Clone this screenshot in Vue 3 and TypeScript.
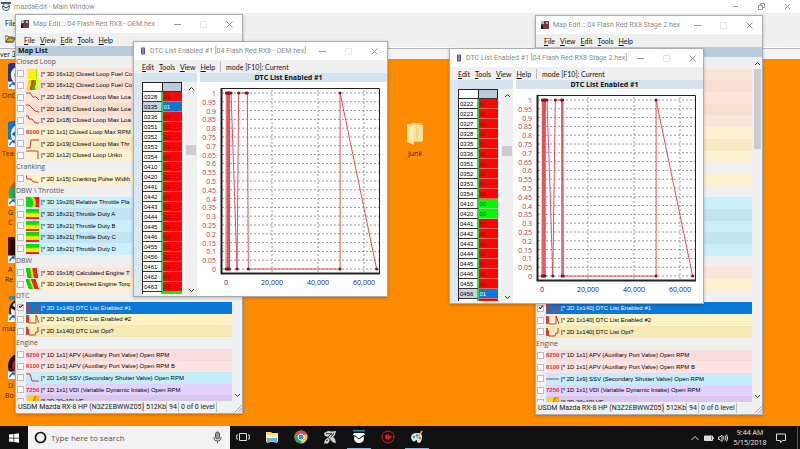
<script setup lang="ts">
interface Thumb {
  kind: 'line' | 'value' | 'surface'
  data: string
}
interface Row {
  head?: string
  text?: string
  tone?: string
  thumb?: Thumb
  checked?: boolean
}
interface Point { x: number; y: number }
interface MapWindow { id: string; title: string; heading: string; rows: Row[] }
interface DtcWindow {
  id: string
  title: string
  codes: string[]
  cleared: string[]
  selected: string
  next: string
  points: Point[]
}

const line = (data: string): Thumb => ({ kind: 'line', data })
const value = (data: string): Thumb => ({ kind: 'value', data })
const surface = (data: string): Thumb => ({ kind: 'surface', data })

const upperRows: Row[] = [
  { head: 'Closed Loop' },
  { text: '[* 3D 16x12] Closed Loop Fuel Co', tone: 'peach', thumb: surface('fuel') },
  { text: '[* 3D 16x12] Closed Loop Fuel Co', tone: 'peach2', thumb: surface('fuel2') },
  { text: '[* 2D 1x18] Closed Loop Max Loa', tone: 'peach', thumb: line('0,1 4,1 7,5 10,5 13,8') },
  { text: '[* 2D 1x18] Closed Loop Max Loa', tone: 'peach2', thumb: line('0,1 3,1 7,5 9,7 13,8') },
  { text: '[* 2D 1x18] Closed Loop Max Loa', tone: 'peach', thumb: line('0,1 2,1 3,4 6,4 9,8 13,8') },
  { text: '[* 1D 1x1] Closed Loop Max RPM', tone: 'cream', thumb: value('6000') },
  { text: '[* 2D 1x19] Closed Loop Max Thr', tone: 'sand', thumb: line('0,9 4,9 5,1 13,1') },
  { text: '[* 2D 1x12] Closed Loop Unkn', tone: 'cream', thumb: line('0,1 12,1 12,9') },
  { head: 'Cranking' },
  { text: '[* 2D 1x15] Cranking Pulse Width', tone: 'cream', thumb: line('0,1 1,5 5,5 7,8 10,8 12,9') },
  { head: 'DBW \\ Throttle' },
  { text: '[* 3D 19x26] Relative Throttle Pla', tone: 'sky', thumb: surface('relative') },
  { text: '[* 3D 18x21] Throttle Duty A', tone: 'sky2', thumb: surface('duty') },
  { text: '[* 3D 18x21] Throttle Duty B', tone: 'sky', thumb: surface('duty') },
  { text: '[* 3D 18x21] Throttle Duty C', tone: 'sky2', thumb: surface('duty') },
  { text: '[* 3D 18x21] Throttle Duty D', tone: 'sky', thumb: surface('duty') },
  { head: 'DBW' },
  { text: '[* 3D 19x18] Calculated Engine T', tone: 'peach', thumb: surface('torque') },
  { text: '[* 3D 20x14] Desired Engine Torq', tone: 'cream', thumb: surface('torque2') },
  { head: 'DTC' },
]

// Rows lying wholly behind another window keep only their colour.
const coveredRows: Row[] = upperRows.map((r) => (r.head ? { head: ' ' } : { tone: r.tone }))

function lowerRows(ssv: string): Row[] {
  return [
    { text: '[* 2D 1x140] DTC List Enabled #1', tone: 'picked', thumb: line('1,9 1,1 2,9 2,1 3,9 10,9 10,1 13,9'), checked: true },
    { text: '[* 2D 1x140] DTC List Enabled #2', tone: 'lemon', thumb: line('0,9 0,1 1,9 1,1 2,9 2,1 3,9 10,9 10,1 13,9') },
    { text: '[* 2D 1x140] DTC List Opt?', tone: 'lemon2', thumb: line('0,9 0,1 1,9 1,1 2,9 2,3 3,9 9,9 10,6 12,6 12,1') },
    { head: 'Engine' },
    { text: '[* 1D 1x1] APV (Auxiliary Port Valve) Open RPM', tone: 'rose', thumb: value('6250') },
    { text: '[* 1D 1x1] APV (Auxiliary Port Valve) Open RPM B', tone: 'rose2', thumb: value('6100') },
    { text: '[* 2D 1x9] SSV (Secondary Shutter Valve) Open RPM', tone: 'aqua', thumb: line(ssv) },
    { text: '[* 1D 1x1] VDI (Variable Dynamic Intake) Open RPM', tone: 'violet', thumb: value('7250') },
    { text: '[* 2D 20x19] VE', tone: 'violet2', thumb: surface('fuel3') },
  ]
}

const mapWindows: MapWindow[] = [
  { id: 'map-oem', title: 'Map Edit :: 04 Flash Red RX8 - OEM.hex', heading: 'Map List', rows: [...upperRows, ...lowerRows('0,1 4,1 6,8 13,8')] },
  { id: 'map-stage', title: 'Map Edit :: 04 Flash Red RX8 Stage 2.hex', heading: '', rows: [...coveredRows, ...lowerRows('0,5 13,5')] },
]

const shared = ['0351', '0352', '0353', '0354', '0410', '0420', '0441', '0442', '0443', '0444', '0445', '0446', '0455', '0456']
const toPoints = (list: number[][]): Point[] => list.map(([x, y]) => ({ x, y }))

const dtcWindows: DtcWindow[] = [
  {
    id: 'dtc-oem',
    title: 'DTC List Enabled #1 [04 Flash Red RX8 - OEM.hex]',
    codes: ['0328', '0335', '0336', ...shared, '0461', '0462', '0463'],
    cleared: [],
    selected: '0335',
    next: 'ok',
    points: toPoints([
      [0, 0], [150, 1], [600, 1], [700, 0], [900, 1], [1100, 0], [1300, 1], [1500, 0], [1550, 1], [2200, 1],
      [4800, 0], [5500, 1], [8700, 1], [9300, 1], [9700, 0], [49600, 0], [49600, 1], [65500, 0],
    ]),
  },
  {
    id: 'dtc-stage',
    title: 'DTC List Enabled #1 [04 Flash Red RX8 Stage 2.hex]',
    codes: ['0222', '0223', '0327', '0328', '0335', '0336', ...shared],
    cleared: ['0410', '0420'],
    selected: '0456',
    next: 'bad',
    points: toPoints([
      [0, 0], [150, 1], [400, 0], [700, 1], [900, 0], [1100, 1], [1300, 0], [1500, 1], [2200, 1],
      [4700, 0], [5800, 1], [8500, 1], [8700, 0], [9000, 1], [9300, 0], [49600, 0], [49600, 1], [65500, 0],
    ]),
  },
]

const X0 = 26
const Y0 = 187
const Y1 = 11
const px = (x: number) => X0 + (x / 20000) * 46
const py = (y: number) => Y0 - y * (Y0 - Y1)
const pathOf = (pts: Point[]) => pts.map((p) => `${px(p.x)},${py(p.y)}`).join(' ')
const yTicks = Array.from({ length: 21 }, (_, i) => i / 20)
const xTicks = [0, 20000, 40000, 60000]

const mapMenu = ['File', 'View', 'Edit', 'Tools', 'Help']
const dtcMenu = ['Edit', 'Tools', 'View', 'Help']

const shortcuts = [
  { id: 'ond', lines: ['OnD'], art: 'navy' },
  { id: 'team', lines: ['Tea'], art: 'team' },
  { id: 'chrome', lines: ['G', 'C'], art: 'ring' },
  { id: 'reader', lines: ['A', 'Re'], art: 'dark' },
  { id: 'maz', lines: ['maz'], art: 'maz' },
  { id: 'bo', lines: ['D', 'Bo'], art: 'black' },
]
</script>

<template>
  <div class="screen">
    <main class="desktop">
      <section class="host">
        <header class="host-title">
          <svg class="gauge" viewBox="0 0 10 9"><path d="M0 0h10v2H0z" fill="#456" /><circle cx="5" cy="5" r="3.6" fill="#eef6f4" stroke="#4a6a70" /><path d="M2 4l3 2 3-2" fill="none" stroke="#333" /></svg>
          <span class="title-text">mazdaEdit - Main Window</span>
          <span class="caption host-caption">
            <button type="button" aria-label="Minimize"><svg viewBox="0 0 7 7"><path d="M1 3.5h5" /></svg></button>
            <button type="button" aria-label="Restore"><svg viewBox="0 0 7 7"><path d="M.5 2.5h4v4h-4zM2.500 2.500v-2h4v4h-2" /></svg></button>
            <button type="button" aria-label="Close"><svg viewBox="0 0 7 7"><path d="M1 1l5 5M6 1L1 6" /></svg></button>
          </span>
        </header>
        <nav class="host-menu"><button type="button">File</button></nav>
        <div class="host-tools">
          <svg viewBox="0 0 10 9"><path d="M0 2h3l1 1h4v5H0z" fill="#f2e27a" stroke="#6d6a2c" /><path d="M1 8l2-4h7L8 8z" fill="#b6b34a" stroke="#55521c" /></svg>
        </div>
        <div class="host-status"><span>ver 3</span></div>
      </section>

      <ul class="shortcuts">
        <li v-for="s in shortcuts" :key="s.id" :class="['shortcut', s.id]">
          <svg class="shortcut-art" viewBox="0 0 28 28">
            <template v-if="s.art === 'navy'"><rect width="28" height="28" rx="3" fill="#27348b" /><circle cx="13" cy="13" r="8" fill="none" stroke="#fff" stroke-width="4" /></template>
            <template v-else-if="s.art === 'team'"><rect width="28" height="28" rx="3" fill="#1477c9" /><circle cx="14" cy="14" r="11" fill="#fff" /><path d="M4 14l6-5v3h8v4h-8v3z" fill="#1477c9" /></template>
            <template v-else-if="s.art === 'ring'"><circle cx="14" cy="14" r="13" fill="#22a565" /><path d="M3 7A13 13 0 0 1 25 7L14 8z" fill="#dd4b3e" /><circle cx="14" cy="14" r="5" fill="#4285f4" stroke="#fff" stroke-width="2" /></template>
            <template v-else-if="s.art === 'dark'"><rect width="28" height="28" fill="#4a0d0a" /><rect x="3" y="3" width="22" height="22" fill="#1f0503" /></template>
            <template v-else-if="s.art === 'maz'"><path d="M1 0h26v4H1z" fill="#2492b8" /><circle cx="14" cy="16" r="12" fill="#f3f3f0" stroke="#222" stroke-width="2" /><path d="M3 11l11 7 11-7" fill="none" stroke="#111" stroke-width="3" /></template>
            <template v-else><circle cx="14" cy="14" r="14" fill="#191214" /><circle cx="14" cy="14" r="8" fill="none" stroke="#c21f2b" stroke-width="3" /></template>
            <rect y="20" width="8" height="8" fill="#fff" /><path d="M2 26q0-3 4-4m-2-.5h2.500v2.500" fill="none" stroke="#1959b8" stroke-width="1.500" />
          </svg>
          <span v-for="l in s.lines" :key="l">{{ l }}</span>
        </li>
      </ul>

      <figure class="folder">
        <svg viewBox="0 0 18 24"><path d="M1 2h4l1-1h10v19H1z" fill="#f0d077" /><path d="M6 3h11v16H6z" fill="#f8e29a" /><path d="M1 2l7 3v18l-7-3z" fill="#fbe9ae" /><path d="M11 6v10" stroke="#e8c768" /></svg>
        <figcaption>Junk</figcaption>
      </figure>

      <section v-for="w in mapWindows" :key="w.id" :class="['window', 'map', w.id]">
        <header class="titlebar">
          <svg class="map-icon" viewBox="0 0 8 8"><path d="M0 0h8v8H0z" fill="#55474a" /><path d="M0 0h3v3H0zM5 1h2v2H5z" fill="#b9b3b3" /><path d="M1 7l2-4 2 3 2-2v4H1z" fill="#a02834" /><path d="M0 5l2-1v4H0z" fill="#151515" /></svg>
          <span class="title-text">{{ w.title }}</span>
          <span class="caption">
            <button type="button" aria-label="Minimize"><svg viewBox="0 0 7 7"><path d="M0 3.500h7" /></svg></button>
            <button type="button" aria-label="Maximize" class="faint"><svg viewBox="0 0 7 7"><path d="M.5.5h6v6h-6z" /></svg></button>
            <button type="button" aria-label="Close"><svg viewBox="0 0 7 7"><path d="M.5.5l6 6M6.500.5l-6 6" /></svg></button>
          </span>
        </header>
        <nav class="menu">
          <button v-for="m in mapMenu" :key="m" type="button"><u>{{ m[0] }}</u>{{ m.slice(1) }}</button>
        </nav>
        <h2 class="list-title">{{ w.heading }}</h2>
        <div class="list-wrap">
          <div class="list">
            <template v-for="(r, i) in w.rows" :key="i">
              <h3 v-if="r.head" class="group">{{ r.head }}</h3>
              <label v-else-if="r.text" class="row">
                <input type="checkbox" :checked="r.checked" />
                <span :class="['row-body', r.tone]">
                  <svg v-if="r.thumb?.kind === 'line'" class="thumb" viewBox="0 0 13 10"><polyline :points="r.thumb.data" /></svg>
                  <span v-else-if="r.thumb?.kind === 'value'" class="thumb num">{{ r.thumb.data }}</span>
                  <span v-else :class="['thumb', 'surface', r.thumb?.data]"></span>
                  <span class="row-text">{{ r.text }}</span>
                </span>
              </label>
              <div v-else :class="['row', r.tone]"></div>
            </template>
          </div>
          <div class="scroll">
            <svg viewBox="0 0 7 5"><path d="M1 4l2.500-2.500L6 4" /></svg>
            <i class="thumb-bar"></i>
            <svg viewBox="0 0 7 5"><path d="M1 1l2.500 2.500L6 1" /></svg>
          </div>
        </div>
        <footer class="status">
          <span class="model">USDM Mazda RX-8 HP (N3Z2EBWWZ05)</span><span class="kb">512Kb</span><span class="count">94</span><span class="level">0 of 0 level</span>
          <svg class="grip" viewBox="0 0 8 8"><path d="M1 8l7-7M4 8l4-4M6.500 8L8 6.500" /></svg>
        </footer>
      </section>

      <section v-for="w in dtcWindows" :key="w.id" :class="['window', 'dtc', w.id]">
        <header class="titlebar">
          <svg class="dtc-icon" viewBox="0 0 5 9"><rect width="5" height="9" rx="1" fill="#4b4b92" /><path d="M1 2h3M1 4.500h3M1 7h3" stroke="#d8d8f4" /></svg>
          <span class="title-text">{{ w.title }}</span>
          <span class="caption">
            <button type="button" aria-label="Minimize"><svg viewBox="0 0 7 7"><path d="M0 3.500h7" /></svg></button>
            <button type="button" aria-label="Maximize" class="faint"><svg viewBox="0 0 7 7"><path d="M.5.5h6v6h-6z" /></svg></button>
            <button type="button" aria-label="Close"><svg viewBox="0 0 7 7"><path d="M.5.5l6 6M6.500.5l-6 6" /></svg></button>
          </span>
        </header>
        <nav class="menu">
          <button v-for="m in dtcMenu" :key="m" type="button"><u>{{ m[0] }}</u>{{ m.slice(1) }}</button>
          <span class="mode">mode [F10]: Current</span>
        </nav>
        <div class="dtc-body">
          <div class="codes-pane">
            <div class="band"></div>
            <div class="codes-area">
              <table class="codes">
                <thead><tr><th></th><th class="col-head"></th></tr></thead>
                <tbody>
                  <tr v-for="c in w.codes" :key="c" :class="{ picked: c === w.selected, ok: w.cleared.includes(c) }">
                    <th scope="row">{{ c }}</th><td>{{ w.cleared.includes(c) ? '00' : '01' }}</td>
                  </tr>
                  <tr :class="['partial', w.next]"><th></th><td></td></tr>
                </tbody>
              </table>
              <div class="scroll">
                <svg viewBox="0 0 7 5"><path d="M1 4l2.500-2.500L6 4" /></svg>
                <i class="thumb-bar"></i>
                <svg viewBox="0 0 7 5"><path d="M1 1l2.500 2.500L6 1" /></svg>
              </div>
            </div>
          </div>
          <div class="chart-pane">
            <h2 class="band">DTC List Enabled #1</h2>
            <svg class="chart" viewBox="0 0 187 214" role="img" aria-label="DTC List Enabled #1">
              <g class="grid">
                <path v-for="t in yTicks" :key="t" :d="`M22 ${py(t)}H179`" />
                <path v-for="t in xTicks.slice(1)" :key="t" :d="`M${px(t)} 8V190`" />
              </g>
              <path class="box-thin" d="M21 6.500H179.500V191" />
              <path class="box" d="M21.500 6V191.500H180" />
              <text v-for="t in yTicks" :key="t" class="y" x="16" :y="py(t) + 3">{{ t }}</text>
              <text v-for="t in xTicks" :key="t" class="x" :x="px(t)" y="203">{{ t.toLocaleString('en-US') }}</text>
              <polyline class="trace" :points="pathOf(w.points)" />
              <circle v-for="(p, i) in w.points" :key="i" :cx="px(p.x)" :cy="py(p.y)" r="1.500" />
            </svg>
          </div>
        </div>
      </section>
    </main>

    <footer class="taskbar">
      <button type="button" class="start" aria-label="Start"><svg viewBox="0 0 10 10"><path d="M0 1.500L4.500 1v3.700H0zM5.200.9L10 .2v4.500H5.200zM0 5.400h4.500V9L0 8.500zM5.200 5.400H10v4.400l-4.800-.7z" fill="#fff" /></svg></button>
      <div class="search">
        <svg viewBox="0 0 13 13"><circle cx="6.500" cy="6.500" r="5" fill="none" stroke="#111" stroke-width="1.700" /></svg>
        <input type="text" aria-label="Search" placeholder="Type here to search" />
        <svg viewBox="0 0 13 13"><rect x="4.500" y="1" width="4" height="7" rx="2" fill="#999" stroke="#555" /><path d="M3 6v1q0 3 3.500 3T10 7V6M6.500 10v2.500" fill="none" stroke="#555" /></svg>
      </div>
      <nav class="apps">
        <button type="button" aria-label="Task view"><svg viewBox="0 0 14 14"><path d="M3.500 3.500h7v7h-7zM2 5H.7v4H2M12 5h1.300v4H12" fill="none" stroke="#ddd" /></svg></button>
        <button type="button" aria-label="File Explorer"><svg viewBox="0 0 14 14"><path d="M1 2h5l1 1h6v9H1z" fill="#f6d978" /><path d="M1 5h12v3H1z" fill="#fbeebc" /><path d="M2 8h10v5H9.500v-2h-5v2H2z" fill="#5fb8dc" /></svg></button>
        <button type="button" aria-label="Chrome"><svg viewBox="0 0 14 14"><circle cx="7" cy="7" r="6.500" fill="#f7cb2d" /><path d="M7 7L1.400 3.700A6.500 6.500 0 0 1 12.600 3.700z" fill="#dd4b3e" /><path d="M7 7L1.400 3.700A6.500 6.500 0 0 0 7 13.500z" fill="#2aa65a" /><circle cx="7" cy="7" r="3" fill="#4285f4" stroke="#fff" /></svg></button>
        <button type="button" aria-label="Tuner"><svg viewBox="0 0 14 14"><path d="M1 3l4-2 4 .5L13 1l-1 4-2 2 2 2 1 4-3-.5L7 10l-2 3.500H1L2 10l3-3-3-1z" fill="#d2d0ca" /><path d="M3 3.500l6 .5M4 6.500l5 5M9 3L3 9M11 3L7.500 7.500M3 11l2-1" stroke="#30302e" /></svg></button>
        <button type="button" aria-label="mazdaEdit" class="open"><svg viewBox="0 0 14 14"><path d="M1 0h12v1.500H1z" fill="#2089ad" /><path d="M2 3h10l1 2H1z" fill="#fff" /><ellipse cx="7" cy="8.500" rx="5" ry="4.500" fill="#fff" /><path d="M3 6l4 3 4-3" fill="none" stroke="#111" /></svg></button>
        <button type="button" aria-label="Recorder"><svg viewBox="0 0 14 14"><circle cx="7" cy="7" r="6" fill="#240506" stroke="#c3242c" /><path d="M4 5.500l2-1.500.5 1.500L8 4v2l2.500-.5L10 8l-2 .5L7.500 10 6 9.500 4.500 9z" fill="#d6222b" /></svg></button>
        <button type="button" aria-label="Paint" class="open"><svg viewBox="0 0 14 14"><path d="M1 8q0-5 6-5t5 5-3 5q-2 0-2-2t-2 0-4-3z" fill="#d9ecec" /><circle cx="4" cy="7" r="1.200" fill="#4aa05a" /><circle cx="7" cy="5.500" r="1.200" fill="#4b7fd0" /><circle cx="10" cy="8" r="1.200" fill="#8b9a40" /><path d="M7 9l5-8" stroke="#e8b24c" stroke-width="1.500" /></svg></button>
      </nav>
      <div class="tray">
        <svg viewBox="0 0 10 10"><path d="M1.500 7L5 3.500 8.500 7" /></svg>
        <svg viewBox="0 0 10 10"><path d="M.5 3h8v4.500h-8zM9.500 4.500v1.500" /><path d="M1 3.500h6v3.500H1z" fill="#ddd" /></svg>
        <svg viewBox="0 0 10 10"><path d="M.5 4h1.500l2-2v6.500l-2-2H.5zM5.500 3.500q1 1.500 0 3M7 2.500q2 2.500 0 5M8.500 1.500q2.500 3.500 0 7" /></svg>
        <time class="clock"><span>9:44 AM</span><span>5/15/2018</span></time>
        <svg class="note" viewBox="0 0 10 10"><path d="M.5 1h9v6.500H6.500L4.500 9.500v-2h-4z" /></svg>
      </div>
    </footer>
  </div>
</template>

<style>
body { margin: 0; overflow: hidden; }
</style>

<style scoped>
.screen {
  --ui: "Open Sans", "Noto Sans", sans-serif;
  --caption: Roboto, "Liberation Sans", sans-serif;
  --sys: Lato, "Liberation Sans", sans-serif;
  --list: "Liberation Sans", sans-serif;
  display: flex; flex-direction: column; height: 100vh;
  font: 7px/10px var(--ui); color: #222; overflow: hidden;
}
button { padding: 0; border: 0; background: none; font: inherit; color: inherit; white-space: nowrap; }
h2, h3, ul, figure { margin: 0; padding: 0; list-style: none; }
svg { display: block; flex: none; }
.desktop { position: relative; flex: 1; min-height: 0; overflow: hidden; background: #ff8c00; }

.host { background: #f0f0f0; }
.host-title { display: flex; align-items: center; height: 13px; padding-left: 1px; background: #fff; }
.gauge { width: 10px; height: 9px; margin-right: 3px; }
.title-text { color: #8c8c8c; font-family: var(--caption); white-space: nowrap; }
.host-menu { height: 19px; padding: 5px 0 0 5px; box-sizing: border-box; }
.host-menu button { display: block; font-family: var(--sys); }
.host-tools { height: 16px; padding: 2px 0 0 5px; box-sizing: border-box; border-bottom: 1px solid #fff; }
.host-tools svg { width: 10px; height: 9px; }
.host-status { height: 12px; box-sizing: border-box; border-top: 1px solid #b4b4b4; border-bottom: 1px solid #999; background: #f4f4f4; font-family: var(--sys); }

.caption { display: flex; margin-left: auto; }
.caption button { display: grid; place-items: center; width: 26px; height: 14px; }
.caption svg { width: 7px; height: 7px; fill: none; stroke: #999; }
.caption .faint svg { stroke: #e6e6e6; }

.shortcut { position: absolute; left: 8px; font-size: 7px; line-height: 10px; color: #3a2410; }
.shortcut-art { width: 26px; height: 26px; margin-bottom: 2px; }
.shortcut span { display: block; }
.ond { top: 63px; } .team { top: 121px; } .chrome { top: 180px; }
.reader { top: 237px; } .maz { top: 296px; } .bo { top: 353px; }
.ond span, .team span, .maz span { margin-left: -6px; }
.reader span + span, .bo span + span { margin-left: -3px; }
.folder { position: absolute; left: 404px; top: 122px; width: 22px; }
.folder svg { width: 18px; height: 24px; margin: 0 auto 3px; }
.folder figcaption { text-align: center; color: #2b1c0a; }

.window { position: absolute; display: flex; flex-direction: column; box-sizing: border-box; border: 1px solid #a9adb0; background: #f0f0f0; box-shadow: 0 1px 3px rgb(0 0 0 / 25%); }
.map { width: 228px; height: 400px; }
.map-oem { left: 15px; top: 14px; }
.map-stage { left: 535px; top: 15px; }
.dtc { width: 255px; height: 256px; }
.dtc-oem { left: 133px; top: 41px; }
.dtc-stage { left: 449px; top: 48px; }
.titlebar { display: flex; align-items: center; flex: none; height: 18px; background: #fff; }
.map-icon { width: 8px; height: 8px; margin: 0 4px 0 5px; }
.dtc-icon { width: 4px; height: 8px; margin: 0 5px 0 7px; }
.menu { display: flex; flex: none; gap: 5px; height: 13px; padding-left: 8px; align-items: center; font-family: var(--sys); font-size: 7px; color: #111; }
.mode { padding-left: 5px; border-left: 1px solid #bbb; white-space: nowrap; }

.list-title { flex: none; height: 10px; padding-left: 2px; background: #b9cbdc; font-size: 7px; line-height: 10px; font-weight: 700; color: #111; }
.list-wrap { display: flex; flex: 1; min-height: 0; overflow: hidden; }
.list { display: grid; grid-auto-rows: 1fr; flex: 1; min-width: 0; height: 351px; }
.group { font-size: 7px; line-height: 12px; font-weight: 400; color: #555; }
.row { display: flex; align-items: center; min-height: 0; overflow: hidden; }
.row input { position: relative; appearance: none; flex: none; width: 7px; height: 7px; margin: 0 2px 0 1px; border: 1px solid #bcbcbc; background: #fff; }
.row input:checked::before { content: ""; position: absolute; left: 1px; top: 0; width: 3px; height: 1px; border: solid #111; border-width: 0 0 1px 1px; transform: rotate(-45deg); }
.row-body { display: flex; align-items: center; flex: 1; min-width: 0; height: 100%; overflow: hidden; }
.row-text { font: 6px/10px var(--list); color: #000; white-space: nowrap; }
.thumb { flex: none; width: 13px; height: 10px; margin-right: 2px; fill: none; stroke: #c33b3b; }
.num { font: 700 6px/10px var(--list); color: #d8323c; text-align: center; }
.surface.duty { background: linear-gradient(#14d614 30%, #e8f000 50%, #ffe600 75%, #f22400 82%); }
.surface.relative { background: radial-gradient(circle at 0 60%, #14d614 45%, #e8f000 60%, #f21414 75%); }
.surface.fuel { background: linear-gradient(90deg, transparent 15%, #f5f500 15% 75%, #9bea14 75% 88%, transparent 88%); }
.surface.fuel2 { background: linear-gradient(100deg, transparent 15%, #e8e414 20% 35%, #e83a14 40% 50%, #1fca1f 55% 70%, #f5f500 72% 88%, transparent 88%); }
.surface.fuel3 { background: linear-gradient(110deg, transparent 15%, #ffd800 20% 50%, #e83a14 55%, #ffb400 62% 88%, transparent 88%); }
.surface.torque { background: linear-gradient(80deg, transparent 8%, #14c914 12% 32%, #f0ee14 48%, #e8281e 60% 82%, transparent 84%); }
.surface.torque2 { background: linear-gradient(70deg, transparent 16%, #14c914 18% 34%, #f0ee14 48%, #e8281e 54% 76%, transparent 80%); }
.peach { background: #fde5da; } .peach2 { background: #f9dfd0; }
.cream { background: #fdf1cf; } .sand { background: #f8e8c4; }
.sky { background: #cdeffd; } .sky2 { background: #c3e4f3; }
.lemon { background: #fdf3c6; } .lemon2 { background: #f6e9b4; }
.rose { background: #f8dcde; } .rose2 { background: #fde3e2; }
.aqua { background: #c6ecfa; }
.violet { background: #e3d2fb; } .violet2 { background: #d8c8ee; }
.picked .row-text { color: #eef6ff; }
.row-body.picked { background: #0a78d6; }

.scroll { display: flex; flex-direction: column; align-items: center; flex: none; width: 10px; box-sizing: border-box; padding: 4px 0 3px; background: #f0f0f0; }
.scroll svg { width: 7px; height: 5px; fill: none; stroke: #333; }
.scroll svg:last-child { margin-top: auto; }
.thumb-bar { width: 7px; height: 80px; margin-top: 3px; background: #cdcdcd; }
.status { display: flex; flex: none; align-items: center; height: 12px; background: #f0f0f0; font-family: var(--caption); white-space: nowrap; }
.status span { flex: none; box-sizing: border-box; height: 10px; line-height: 10px; padding-left: 2px; border-right: 1px solid #bbb; }
.model { width: 128px; } .kb { width: 23px; } .count { width: 12px; } .level { width: 38px; }
.grip { width: 8px; height: 8px; margin: 2px 0 0 auto; fill: none; stroke: #aaa; }

.dtc-body { display: flex; flex: 1; min-height: 0; padding-left: 8px; background: #dbe8f2; }
.codes-pane { display: flex; flex-direction: column; width: 55px; border-right: 3px solid #fff; background: #fff; }
.band { flex: none; height: 9px; padding-right: 10px; background: #d5e3ef; font-size: 7px; line-height: 9px; font-weight: 700; text-align: center; color: #111; }
.codes-area { display: flex; flex: 1; min-height: 0; gap: 3px; overflow: hidden; background: #f4f7fa; }
.codes { flex: none; width: 40px; height: 212px; border-spacing: 0; border-left: 1px solid #222; table-layout: fixed; font: 6px/8px var(--list); }
.codes th, .codes td { box-sizing: border-box; height: 10px; padding: 0; text-align: left; font-weight: 400; line-height: 8px; }
.codes th { border-bottom: 1px solid #333; border-right: 2px solid #2bd84a; padding-left: 1px; background: #fff; color: #000; }
.codes td { border-bottom: 1px solid #e86a5a; padding-left: 1px; background: #fb0505; color: #8c1010; }
.codes thead th { border-top: 1px solid #222; border-right: 1px solid #222; }
.codes .col-head { background: #b9cadb; }
.codes .ok td { background: #06f606; border-color: #7fe07f; color: #0a7a0a; }
.codes tr.picked th { background: #c5d3e0; }
.codes tr.picked td { background: #0a78d6; color: #fff; }
.codes .partial th, .codes .partial td { height: 2px; border-bottom: 0; }
.codes-area .scroll { width: 12px; }
.codes-area .scroll .thumb-bar { width: 10px; height: 10px; margin-top: 54px; }
.dtc-stage .codes-area .scroll .thumb-bar { margin-top: 48px; }
.chart-pane { display: flex; flex-direction: column; flex: 1; min-width: 0; background: #fff; }
.chart { width: 187px; height: 214px; font-family: var(--ui); font-size: 7px; }
.grid path { stroke: #9a9a9a; stroke-dasharray: 2 2; }
.box, .box-thin { fill: none; stroke: #222; }
.box { stroke-width: 2; }
.y { fill: #c2344c; text-anchor: end; }
.x { fill: #23236e; text-anchor: middle; }
.trace { fill: none; stroke: #e0525a; }
.chart circle { fill: #8c1018; }

.taskbar { display: flex; flex: none; height: 23px; background: #101010; color: #eee; }
.start { display: grid; place-items: center; width: 28px; }
.start svg { width: 10px; height: 10px; }
.search { display: flex; align-items: center; gap: 4px; width: 202px; box-sizing: border-box; padding: 0 6px; background: #f2f2f2; }
.search svg { width: 13px; height: 13px; }
.search input { flex: 1; min-width: 0; padding: 0; border: 0; outline: 0; background: none; font: 8px/12px var(--ui); color: #333; }
.search input::placeholder { color: #555; opacity: 1; }
.apps { display: flex; gap: 5px; padding-left: 1px; }
.apps button { display: grid; place-items: center; box-sizing: border-box; width: 24px; border-bottom: 1px solid transparent; }
.apps .open { border-color: #7fb4e6; }
.apps svg { width: 14px; height: 14px; }
.tray { display: flex; align-items: center; gap: 4px; margin-left: auto; margin-right: 2px; padding-right: 11px; border-right: 1px solid #555; }
.tray svg { width: 10px; height: 10px; fill: none; stroke: #ddd; }
.clock { display: flex; flex-direction: column; width: 36px; text-align: center; font-size: 7px; line-height: 10px; }
.tray .note { margin-left: 4px; }
</style>
